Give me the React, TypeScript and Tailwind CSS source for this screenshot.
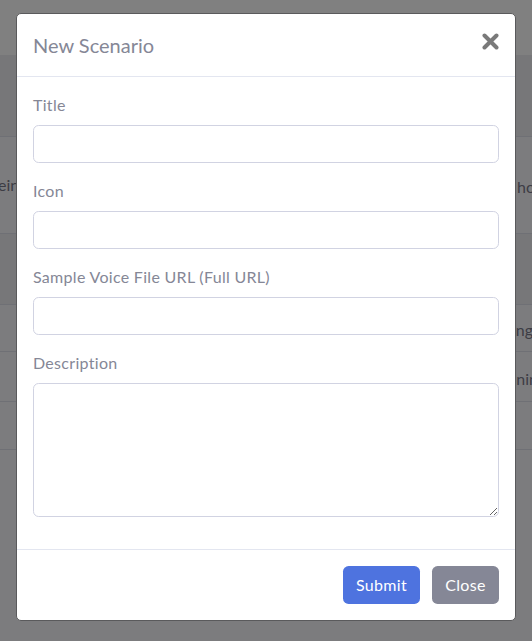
import React from 'react';

const font = { fontFamily: 'Lato, "Noto Sans", sans-serif' };

function BgRow({ h, shade, left, right, rightCls }: { h: string; shade: string; left?: string; right?: string; rightCls?: string }) {
  return (
    <div className={`flex items-center justify-between overflow-hidden border-b border-[#6f7075] ${h} ${shade}`}>
      <span className="-ml-[2px] text-[16px] text-[#3c3d45]">{left}</span>
      <span className={`text-[16px] text-[#3c3d45] ${rightCls ?? ''}`}>{right}</span>
    </div>
  );
}

function Field({ label, children }: { label: string; children: React.ReactNode }) {
  return (
    <div className="mb-4 flex flex-col">
      <label className="mb-2 text-[16px] leading-6 tracking-[0.3px] text-[#858796]">{label}</label>
      {children}
    </div>
  );
}

export default function App() {
  const inputCls =
    'h-[38px] w-full rounded-[5.6px] border border-[#d1d3e2] bg-white px-3 text-[16px] text-[#6e707e] outline-none';

  return (
    <main className="relative h-[641px] w-[532px] overflow-hidden bg-[#7c7c7e]" style={font}>
      {/* dimmed page behind the modal */}
      <div className="flex flex-col">
        <div className="h-[55px] bg-[#808080]" />
        <BgRow h="h-[82px]" shade="bg-[#777779]" />
        <BgRow h="h-[97px]" shade="bg-[#7c7c7e]" left="ein" right="hod" rightCls="-mr-[12px] pt-[4px]" />
        <BgRow h="h-[71px]" shade="bg-[#777779]" />
        <BgRow h="h-[47px]" shade="bg-[#7c7c7e]" right="ng" rightCls="-mr-[1px] pt-[4px]" />
        <BgRow h="h-[50px]" shade="bg-[#7c7c7e]" right="nin" rightCls="-mr-[6px] pt-[4px]" />
        <BgRow h="h-[48px]" shade="bg-[#7c7c7e]" />
      </div>

      {/* modal */}
      <div className="absolute left-[16px] top-[13px] w-[500px] rounded-[5px] border border-[#5a5a5c] bg-white">
        <div className="flex items-start justify-between border-b border-[#e3e6f0] p-4">
          <h5 className="text-[20px] leading-[30px] text-[#858796]">New Scenario</h5>
          <button className="mt-[3px]" aria-label="Close">
            <svg width="17" height="17" viewBox="0 0 17 17">
              <path d="M2.5 2.5 L14.5 14.5 M14.5 2.5 L2.5 14.5" stroke="#7a7a7a" strokeWidth="4" strokeLinecap="round" />
            </svg>
          </button>
        </div>

        <div className="p-4 pb-0">
          <Field label="Title">
            <input className={inputCls} />
          </Field>
          <Field label="Icon">
            <input className={inputCls} />
          </Field>
          <Field label="Sample Voice File URL (Full URL)">
            <input className={inputCls} />
          </Field>
          <Field label="Description">
            <textarea
              rows={5}
              className="block h-[134px] w-full rounded-[5.6px] border border-[#d1d3e2] bg-white px-3 py-[6px] text-[16px] text-[#6e707e] outline-none"
            />
          </Field>
          <div className="h-4" />
        </div>

        <div className="flex justify-end gap-3 border-t border-[#e3e6f0] p-4">
          <button className="h-[38px] w-[77px] rounded-[5.6px] bg-[#4e73df] text-[16px] tracking-[0.3px] text-white">Submit</button>
          <button className="h-[38px] w-[67px] rounded-[5.6px] bg-[#858796] text-[16px] tracking-[0.3px] text-white">Close</button>
        </div>
      </div>
    </main>
  );
}
